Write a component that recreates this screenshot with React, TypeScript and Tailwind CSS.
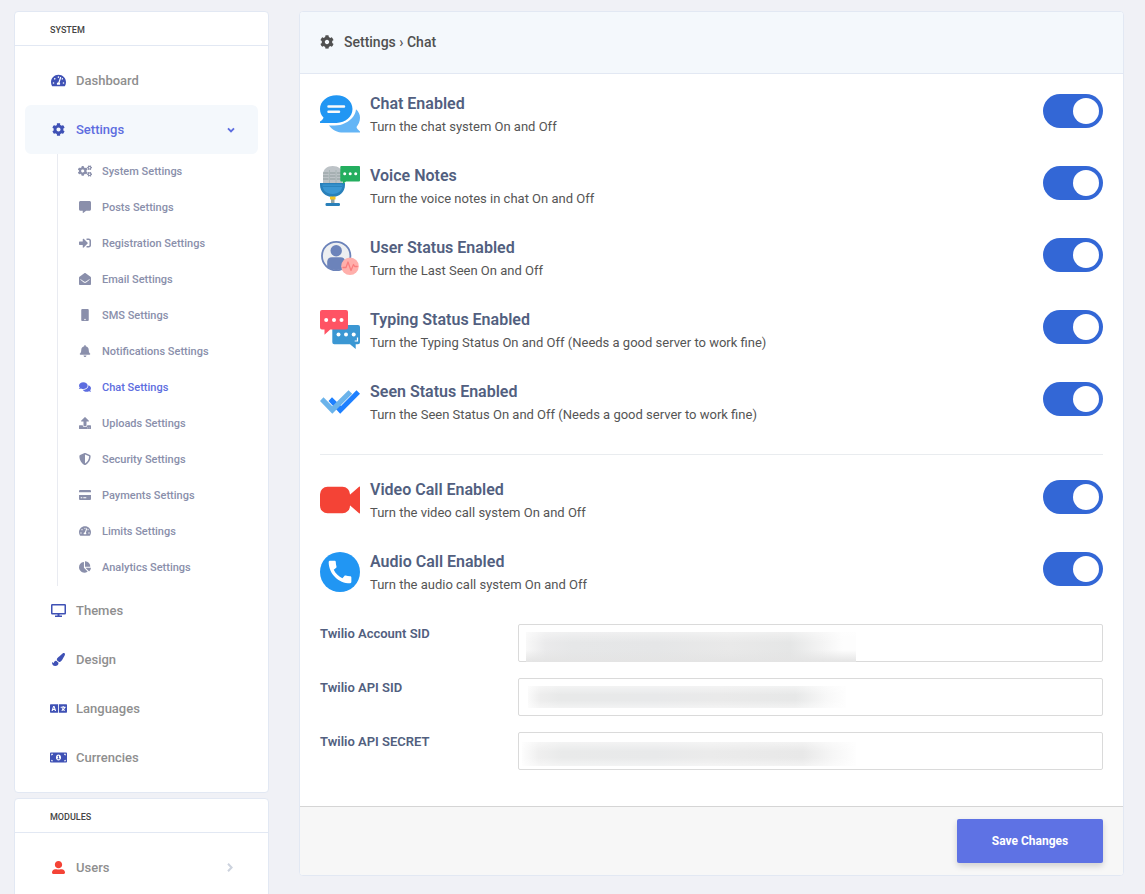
import type { ReactNode } from 'react';
import type { IconType } from 'react-icons';
import {
  FaBell,
  FaChartPie,
  FaCog,
  FaCogs,
  FaCommentAlt,
  FaComments,
  FaEnvelopeOpen,
  FaLanguage,
  FaMobile,
  FaMoneyBillAlt,
  FaPaintBrush,
  FaShieldAlt,
  FaSignInAlt,
  FaTachometerAlt,
  FaUpload,
  FaUserAlt,
} from 'react-icons/fa';

function MonitorIcon({ className }: { className?: string }) {
  return (
    <svg viewBox="0 0 15 13" className={className} aria-hidden="true">
      <rect x="0.75" y="0.75" width="13.5" height="9" rx="0.5" fill="none" stroke="currentColor" strokeWidth="1.5" />
      <path d="M6.500 9.500h2v2H11V13H4v-1.500h2.500z" fill="currentColor" />
    </svg>
  );
}

function CardIcon({ className }: { className?: string }) {
  return (
    <svg viewBox="0 0 12 10" className={className} aria-hidden="true">
      <path
        d="M0 2.2V1a1 1 0 0 1 1-1h10a1 1 0 0 1 1 1v1.200zM0 5h12v4a1 1 0 0 1-1 1H1a1 1 0 0 1-1-1zm1.700 2.200v1h1.600v-1zm2.600 0v1h3v-1z"
        fill="currentColor"
        fillRule="evenodd"
      />
    </svg>
  );
}

function ChevronDown() {
  return (
    <svg viewBox="0 0 8 6" className="h-1.5 w-2" aria-hidden="true">
      <path d="M1 1.300l3 3 3-3" fill="none" stroke="currentColor" strokeWidth="1.900" />
    </svg>
  );
}

function ChevronRight() {
  return (
    <svg viewBox="0 0 6 9" className="mr-0.5 h-[9px] w-1.5 text-[#cdd3de]" aria-hidden="true">
      <path d="M1 0.800l3.600 3.700L1 8.200" fill="none" stroke="currentColor" strokeWidth="2" />
    </svg>
  );
}

function ChatArt() {
  return (
    <svg viewBox="0 0 40 40" className="size-10" aria-hidden="true">
      <path d="M36 15.300c2.600 2.300 4 5.200 4 8.500 0 3.800-1.700 6.800-3.500 9.200.3 1.600 1.700 3 3.500 4.400v1.200H23.500c-6.200 0-11.300-2.700-14.500-7.200 4 .1 9.500.2 13.500-1.200C30 27.600 35.500 22 36 15.300z" fill="#64b5f6" />
      <path d="M16.500 1.200C25.500 1.200 32.500 7.200 32.500 15S25.500 28.900 16.500 28.900H0V27.600c1.800-1.200 3.100-2.500 3.500-4.100C1.200 21.300 0 18.400 0 15 0 7.200 7.400 1.200 16.500 1.200z" fill="#2196f3" />
      <path d="M8.500 12.500h15.500M8.500 17.700h10.500" stroke="#fafafa" strokeWidth="2.500" strokeLinecap="round" />
    </svg>
  );
}

function MicrophoneArt() {
  return (
    <svg viewBox="0 0 40 40" className="size-10" aria-hidden="true">
      <path d="M3 17V8.500C3 3.200 7.200 0 12.700 0S22.500 3.200 22.500 8.500V17z" fill="#bdc3c7" />
      <path d="M3 7h5.500M3 10h5.500M3 13h5.500M10 7h5.500M10 10h5.500M10 13h5.500M17 7h5.500M17 10h5.500M17 13h5.500" stroke="#8b9798" strokeWidth="0.900" />
      <path d="M9.500 4v13M16 4v13" stroke="#a3b1b1" strokeWidth="0.800" />
      <rect x="11" y="32" width="3.500" height="6" fill="#95a5a5" />
      <path d="M0 17h25v2c0 6.800-5.500 12-12.500 12S0 25.800 0 19z" fill="#2980ba" />
      <path d="M2.500 18.500h20c0 6-4 9.500-10 9.500S2.500 24.500 2.500 18.500z" fill="#3b97d3" />
      <path d="M3 20.300h19" stroke="#2980ba" strokeWidth="1" />
      <rect x="10" y="30.500" width="5.500" height="3" rx="0.500" fill="#f3c41f" />
      <rect x="5.500" y="37" width="14.500" height="3" rx="1.200" fill="#2980ba" />
      <path d="M21.300 0H39a1 1 0 0 1 1 1v13.500a1 1 0 0 1-1 1H26L22.800 18v-2.500h-1.500a1 1 0 0 1-1-1V1a1 1 0 0 1 1-1z" fill="#24ae5f" />
      <g fill="#fff">
        <circle cx="24.700" cy="7.700" r="1.500" />
        <circle cx="30.200" cy="7.700" r="1.500" />
        <circle cx="35.700" cy="7.700" r="1.500" />
      </g>
    </svg>
  );
}

function UserStatusArt() {
  return (
    <svg viewBox="0 0 40 40" className="size-10" aria-hidden="true">
      <circle cx="16.200" cy="18" r="14.200" fill="#edeff1" stroke="#6c83ba" strokeWidth="1.800" />
      <circle cx="16.200" cy="12.700" r="5.700" fill="#6c83ba" />
      <path d="M7.200 29V23.500a4.800 4.800 0 0 1 4.800-4.300h8.400a4.800 4.800 0 0 1 4.800 4.300V29c-5.200 4-12.500 4-18 0z" fill="#6c83ba" />
      <circle cx="30" cy="28.200" r="8.800" fill="#ffafab" />
      <path d="M23 29.500h3l2-5.500 3 8.500 2.500-6 1.200 2h2.500" fill="none" stroke="#fa7e7e" strokeWidth="1.300" strokeLinecap="round" strokeLinejoin="round" />
    </svg>
  );
}

function TypingArt() {
  return (
    <svg viewBox="0 0 40 40" className="size-10" aria-hidden="true">
      <path d="M14.300 15H38a2 2 0 0 1 2 2v15.200a2 2 0 0 1-2 2h-2.300V39L30 34.200H14.300a2 2 0 0 1-2-2V17a2 2 0 0 1 2-2z" fill="#3b97d3" />
      <path d="M2 0h24a2 2 0 0 1 2 2v15.500a2 2 0 0 1-2 2H10.200L4.500 24.700v-5.200H2a2 2 0 0 1-2-2V2a2 2 0 0 1 2-2z" fill="#ff5364" />
      <g fill="#fff">
        <circle cx="6.200" cy="10" r="2" />
        <circle cx="14" cy="10" r="2" />
        <circle cx="21.500" cy="10" r="2" />
        <circle cx="18.500" cy="24.500" r="2" />
        <circle cx="26" cy="24.500" r="2" />
        <circle cx="33.700" cy="24.500" r="2" />
      </g>
      <path d="M37.500 27.500V31h-2.800" fill="none" stroke="#fff" strokeWidth="1.200" />
    </svg>
  );
}

function SeenArt() {
  return (
    <svg viewBox="0 0 40 40" className="size-10" aria-hidden="true">
      <path d="M8.500 19l3.500-3.800 9 8.800L36.500 8.200 40 11.700 20.200 31.700z" fill="#1e80ff" />
      <path d="M0 19l3.500-3.700 8.800 9L28.500 8.300l3.700 3.500L12.300 31.700z" fill="#6bb3ea" />
    </svg>
  );
}

function VideoArt() {
  return (
    <svg viewBox="0 0 40 40" className="size-10" aria-hidden="true">
      <rect x="0" y="6.700" width="30" height="26.600" rx="7.500" fill="#f44336" />
      <path d="M40 6.500v27c-.7 0-1.300-.5-1.800-1L29 24.500v-9l9.200-8c.6-.5 1.100-1 1.800-1z" fill="#f44336" />
    </svg>
  );
}

function PhoneArt() {
  return (
    <svg viewBox="0 0 40 40" className="size-10" aria-hidden="true">
      <circle cx="20" cy="20" r="20" fill="#2196f3" />
      <path
        transform="translate(4.900 4.900) scale(1.260)"
        fill="#fff"
        d="M20.010 15.380c-1.230 0-2.420-.2-3.530-.56-.35-.12-.74-.03-1.010.24l-1.570 1.970c-2.830-1.350-5.480-3.900-6.890-6.830l1.950-1.660c.27-.28.35-.67.24-1.020-.37-1.110-.56-2.300-.56-3.530 0-.54-.45-.99-.99-.99H4.190C3.650 3 3 3.240 3 3.990 3 13.280 10.730 21 20.010 21c.71 0 .99-.63.99-1.180v-3.450c0-.54-.45-.99-.99-.99z"
      />
    </svg>
  );
}

type MenuIcon = IconType | typeof MonitorIcon;

const settingsLinks: { label: string; icon: MenuIcon; active?: boolean }[] = [
  { label: 'System Settings', icon: FaCogs },
  { label: 'Posts Settings', icon: FaCommentAlt },
  { label: 'Registration Settings', icon: FaSignInAlt },
  { label: 'Email Settings', icon: FaEnvelopeOpen },
  { label: 'SMS Settings', icon: FaMobile },
  { label: 'Notifications Settings', icon: FaBell },
  { label: 'Chat Settings', icon: FaComments, active: true },
  { label: 'Uploads Settings', icon: FaUpload },
  { label: 'Security Settings', icon: FaShieldAlt },
  { label: 'Payments Settings', icon: CardIcon },
  { label: 'Limits Settings', icon: FaTachometerAlt },
  { label: 'Analytics Settings', icon: FaChartPie },
];

const messaging = [
  { id: 'chat', title: 'Chat Enabled', text: 'Turn the chat system On and Off', art: <ChatArt /> },
  { id: 'voice', title: 'Voice Notes', text: 'Turn the voice notes in chat On and Off', art: <MicrophoneArt /> },
  { id: 'user-status', title: 'User Status Enabled', text: 'Turn the Last Seen On and Off', art: <UserStatusArt /> },
  { id: 'typing', title: 'Typing Status Enabled', text: 'Turn the Typing Status On and Off (Needs a good server to work fine)', art: <TypingArt /> },
  { id: 'seen', title: 'Seen Status Enabled', text: 'Turn the Seen Status On and Off (Needs a good server to work fine)', art: <SeenArt /> },
];

const calls = [
  { id: 'video', title: 'Video Call Enabled', text: 'Turn the video call system On and Off', art: <VideoArt /> },
  { id: 'audio', title: 'Audio Call Enabled', text: 'Turn the audio call system On and Off', art: <PhoneArt /> },
];

const credentials = [
  {
    id: 'account-sid',
    label: 'Twilio Account SID',
    mask: 'left-2 top-2 h-[30px] w-[330px] bg-[linear-gradient(to_bottom,#ffffff66,#ffffff00_35%,#e4e4e400_60%,#e4e4e4),linear-gradient(to_right,#f8f8f8,#eaeaeb_6%,#e6e7e8_14%,#e5e6e7_40%,#e9e9e9_62%,#e5e6e6_80%,#f4f4f4_90%,#fdfdfd_96%)]',
  },
  {
    id: 'api-sid',
    label: 'Twilio API SID',
    mask: 'left-2.5 top-2 h-[22px] w-[318px] bg-[linear-gradient(to_bottom,#ffffff77,#ffffff00_40%,#ffffff00_65%,#ffffff77),linear-gradient(to_right,#fafafa,#ededed_4%,#e8e9e9_10%,#e8e9ea_40%,#eaeaea_60%,#e7e8e8_84%,#f8f8f8_94%,#fefefe)]',
  },
  {
    id: 'api-secret',
    label: 'Twilio API SECRET',
    mask: 'left-1 top-2.5 h-6 w-[334px] bg-[linear-gradient(to_bottom,#ffffff77,#ffffff00_40%,#ffffff00_65%,#ffffff77),linear-gradient(to_right,#fdfdfd,#efefef_5%,#e9eaea_12%,#e8e9ea_40%,#ebebeb_56%,#e8e8e8_84%,#f6f6f6_93%,#fefefe)]',
  },
];

function Panel({ title, children }: { title: string; children: ReactNode }) {
  return (
    <section className="rounded border border-[#e2e8f3] bg-white">
      <h2 className="border-b border-[#e2e8f3] pt-2.5 pb-1.5 pl-[35px] text-[9px] leading-[17px] font-medium text-[#444] uppercase">{title}</h2>
      <ul className="p-2.5">{children}</ul>
    </section>
  );
}

function NavItem({ label, icon: Icon, size, tone = 'text-[#3f51b5]', arrow, active, children }: {
  label: string;
  icon: MenuIcon;
  size: string;
  tone?: string;
  arrow?: 'down' | 'right';
  active?: boolean;
  children?: ReactNode;
}) {
  return (
    <li>
      <a href="#" className={`flex h-[49px] items-center rounded-md pr-[23px] pl-6 text-[13px] font-medium ${active ? 'bg-[#f4f8fc] text-[#5d6de0]' : 'text-[#8f8f8f]'}`}>
        <span className={`flex w-[18px] justify-center ${tone}`}>
          <Icon className={size} />
        </span>
        <span className="ml-[9px] grow">{label}</span>
        {arrow === 'down' && <ChevronDown />}
        {arrow === 'right' && <ChevronRight />}
      </a>
      {children}
    </li>
  );
}

function ToggleRow({ id, title, text, art }: { id: string; title: string; text: string; art: ReactNode }) {
  return (
    <div className="flex h-[72px] items-start">
      {art}
      <div className="ml-2.5 grow">
        <label htmlFor={id} className="block text-base leading-5 font-semibold text-[#525f7f]">{title}</label>
        <p className="mt-[3px] text-[13px] leading-5 text-[#555]">{text}</p>
      </div>
      <input
        id={id}
        type="checkbox"
        defaultChecked
        className="flex h-[34px] w-[60px] shrink-0 cursor-pointer appearance-none items-center rounded-full bg-[#ccc] px-1 before:size-[26px] before:rounded-full before:bg-white before:content-[''] checked:justify-end checked:bg-[#3367d6]"
      />
    </div>
  );
}

export default function App() {
  return (
    <div className="flex min-h-screen items-start gap-[30px] bg-[#f0f1f6] pt-[11px] pr-[21px] pl-3.5 font-[Roboto,sans-serif]">
      <nav className="flex w-[255px] shrink-0 flex-col gap-[5px]">
        <Panel title="System">
          <NavItem label="Dashboard" icon={FaTachometerAlt} size="size-[15px]" />
          <NavItem label="Settings" icon={FaCog} size="size-[13px]" arrow="down" active>
            <ul className="ml-8 border-l border-[#e9ebf1]">
              {settingsLinks.map(({ label, icon: Icon, active }) => (
                <li key={label}>
                  <a href="#" className={`flex h-9 items-center pb-0.5 pl-5 text-[11px] font-medium ${active ? 'text-[#5d6de0]' : 'text-[#8a8fab]'}`}>
                    <span className="flex w-3.5 justify-center">
                      <Icon className={label === 'System Settings' ? 'size-3.5' : 'size-3'} />
                    </span>
                    <span className="ml-2.5 pt-0.5">{label}</span>
                  </a>
                </li>
              ))}
            </ul>
          </NavItem>
          <NavItem label="Themes" icon={MonitorIcon} size="h-[13px] w-[15px]" />
          <NavItem label="Design" icon={FaPaintBrush} size="size-[13px]" />
          <NavItem label="Languages" icon={FaLanguage} size="size-[17px]" />
          <NavItem label="Currencies" icon={FaMoneyBillAlt} size="size-[17px]" />
        </Panel>
        <Panel title="Modules">
          <NavItem label="Users" icon={FaUserAlt} size="size-[13px]" tone="text-[#f44336]" arrow="right" />
        </Panel>
      </nav>

      <main className="min-w-0 grow overflow-hidden rounded border border-[#e2e8f3] bg-white">
        <header className="flex h-[62px] items-center border-b border-[#e2e8f3] bg-[#f4f8fc] px-5 pb-0.5 text-[#505050]">
          <FaCog className="size-3.5" />
          <h1 className="ml-2.5 text-sm font-medium">Settings › Chat</h1>
        </header>
        <form>
          <div className="px-5 pt-5 pb-9">
            {messaging.map((row) => (
              <ToggleRow key={row.id} {...row} />
            ))}
            <hr className="mb-[25px] border-[#e9ecef]" />
            {calls.map((row) => (
              <ToggleRow key={row.id} {...row} />
            ))}
            <div className="flex flex-col gap-4">
              {credentials.map(({ id, label, mask }) => (
                <div key={id} className="flex items-start">
                  <label htmlFor={id} className="w-[198px] shrink-0 text-[13px] leading-[19px] font-semibold text-[#525f7f]">{label}</label>
                  <div className="relative grow">
                    <input id={id} type="text" className="block h-[38px] w-full rounded-xs border border-[#dadada] px-3 text-[13px] outline-none" />
                    <span className={`pointer-events-none absolute ${mask}`} />
                  </div>
                </div>
              ))}
            </div>
          </div>
          <footer className="flex justify-end border-t border-[#d5d5d5] bg-[#f7f7f7] px-5 py-3">
            <button type="button" className="h-11 w-[146px] rounded-xs bg-[#5e72e4] text-xs font-bold text-white shadow-[0_3px_6px_rgba(0,0,0,0.16)]">Save Changes</button>
          </footer>
        </form>
      </main>
    </div>
  );
}
